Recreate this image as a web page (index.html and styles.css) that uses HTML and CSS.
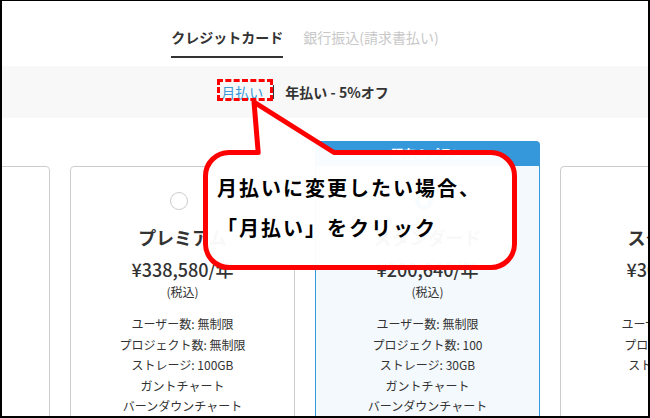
FILE: index.html
```html
<!DOCTYPE html>
<html lang="ja">
<head>
<meta charset="utf-8">
<title>プラン選択</title>
<link rel="stylesheet" href="styles.css">
</head>
<body>
<div class="frame">
  <div class="tabs">
    <div class="tab active">クレジットカード</div>
    <div class="tab">銀行振込(請求書払い)</div>
  </div>
  <div class="band">
    <span class="opt link">月払い</span>
    <span class="sep"></span>
    <span class="opt strong">年払い - 5%オフ</span>
  </div>
  <div class="cards">
    <div class="card">
      <div class="card-body">
        <div class="radio-row"><span class="radio"></span></div>
        <div class="plan-name">プラチナ</div>
        <div class="price">¥627,000/年</div>
        <div class="tax">(税込)</div>
        <ul class="features">
          <li>ユーザー数: 無制限</li>
          <li>プロジェクト数: 無制限</li>
          <li>ストレージ: 300GB</li>
          <li>ガントチャート</li>
          <li>バーンダウンチャート</li>
        </ul>
      </div>
    </div>
    <div class="card">
      <div class="card-body">
        <div class="radio-row"><span class="radio"></span></div>
        <div class="plan-name">プレミアム</div>
        <div class="price">¥338,580/年</div>
        <div class="tax">(税込)</div>
        <ul class="features">
          <li>ユーザー数: 無制限</li>
          <li>プロジェクト数: 無制限</li>
          <li>ストレージ: 100GB</li>
          <li>ガントチャート</li>
          <li>バーンダウンチャート</li>
        </ul>
      </div>
    </div>
    <div class="card current">
      <div class="card-head">現在のプラン</div>
      <div class="card-body">
        <div class="radio-row"><span class="radio checked"></span></div>
        <div class="plan-name">スタンダード</div>
        <div class="price">¥200,640/年</div>
        <div class="tax">(税込)</div>
        <ul class="features">
          <li>ユーザー数: 無制限</li>
          <li>プロジェクト数: 100</li>
          <li>ストレージ: 30GB</li>
          <li>ガントチャート</li>
          <li>バーンダウンチャート</li>
        </ul>
      </div>
    </div>
    <div class="card">
      <div class="card-body">
        <div class="radio-row"><span class="radio"></span></div>
        <div class="plan-name">スターター</div>
        <div class="price">¥30,096/年</div>
        <div class="tax">(税込)</div>
        <ul class="features">
          <li>ユーザー数: 無制限</li>
          <li>プロジェクト数: 5</li>
          <li>ストレージ: 1GB</li>
        </ul>
      </div>
    </div>
  </div>

  <div class="mark-box"></div>
  <svg class="callout-shape" width="650" height="418" viewBox="0 0 650 418">
    <path d="M258.2 152.5 L254 102 L334 152.5 L491 152.5 A23.5 23.5 0 0 1 514.5 176 L514.5 244 A23.5 23.5 0 0 1 491 267.5 L229 267.5 A23.5 23.5 0 0 1 205.5 244 L205.5 176 A23.5 23.5 0 0 1 229 152.5 Z"
      fill="rgba(255,255,255,0.97)" stroke="#ff0000" stroke-width="5" stroke-linejoin="round"/>
  </svg>
  <div class="bubble-text">
    <div>月払いに変更したい場合、</div>
    <div>「月払い」をクリック</div>
  </div>
</div>
</body>
</html>
```

FILE: styles.css
```css
html, body {
  margin: 0;
  padding: 0;
  background: #fff;
}

.frame {
  position: relative;
  width: 650px;
  height: 418px;
  overflow: hidden;
  background: #fff;
  font-family: "Noto Sans CJK JP", "Noto Sans", sans-serif;
  color: #333;
}

.frame::after {
  content: "";
  position: absolute;
  inset: 0;
  border: 2px solid #000;
  border-top-width: 1px;
  pointer-events: none;
  z-index: 20;
}

/* tabs */
.tabs {
  display: flex;
  justify-content: center;
  gap: 20px;
  padding: 27px 40px 0 0;
}

.tab {
  font-size: 14px;
  line-height: 20px;
  padding-bottom: 9px;
  color: #c8c8c8;
}

.tab.active {
  font-weight: 700;
  color: #333;
  border-bottom: 2px solid #333;
}

/* billing cycle band */
.band {
  margin-top: 8px;
  height: 52px;
  background: #f8f8f8;
  display: flex;
  align-items: center;
  justify-content: center;
  padding-right: 40px;
}

.opt {
  font-size: 14px;
  line-height: 20px;
}

.link {
  color: #3a9ad9;
}

.strong {
  font-weight: 700;
  color: #333;
}

.sep {
  width: 1px;
  height: 14px;
  background: #333;
  margin: 0 11px 0 10px;
}

/* plan cards */
.cards {
  display: flex;
  justify-content: center;
  align-items: flex-start;
  gap: 20px;
  margin-top: 23px;
  padding-right: 40px;
}

.card {
  flex: none;
  width: 225px;
  margin-top: 25px;
}

.card.current {
  margin-top: 0;
}

.card-head {
  height: 25px;
  line-height: 25px;
  background: #3498db;
  color: #fff;
  font-size: 12px;
  font-weight: 700;
  text-align: center;
  border-radius: 4px 4px 0 0;
}

.card-body {
  box-sizing: border-box;
  height: 300px;
  padding-top: 25px;
  border: 1px solid #cccccc;
  border-radius: 4px 4px 0 0;
  background: #fff;
  text-align: center;
}

.card.current .card-body {
  border-color: #3498db;
  border-top: none;
  border-radius: 0;
  background: #f4f9fd;
  padding-top: 26px;
}

.radio-row {
  display: flex;
  justify-content: center;
}

.radio {
  box-sizing: border-box;
  width: 18px;
  height: 18px;
  border: 1px solid #ccc;
  border-radius: 50%;
  background: #fff;
  margin-right: 7px;
}

.radio.checked {
  border: 5px solid #3498db;
}

.plan-name {
  margin-top: 14px;
  font-size: 18px;
  line-height: 26px;
  font-weight: 700;
  color: #333;
}

.price {
  margin-top: 7px;
  font-size: 18px;
  line-height: 24px;
  font-weight: 500;
  color: #333;
}

.tax {
  margin-top: 3px;
  font-size: 12px;
  line-height: 16px;
}

.features {
  list-style: none;
  margin: 14px 0 0;
  padding: 0;
  font-size: 12px;
  line-height: 20.5px;
  color: #333;
}

/* annotation overlays */
.mark-box {
  position: absolute;
  left: 217px;
  top: 79px;
  width: 56px;
  height: 22px;
  box-sizing: border-box;
  border: 3px dashed #ff0000;
  z-index: 5;
}

.callout-shape {
  position: absolute;
  left: 0;
  top: 0;
  pointer-events: none;
  z-index: 6;
}

.bubble-text {
  position: absolute;
  left: 203px;
  top: 150px;
  width: 314px;
  height: 120px;
  box-sizing: border-box;
  padding: 18px 0 0 14px;
  color: #000;
  font-size: 20px;
  line-height: 40px;
  font-weight: 700;
  letter-spacing: 2px;
  white-space: nowrap;
  z-index: 7;
}
```
